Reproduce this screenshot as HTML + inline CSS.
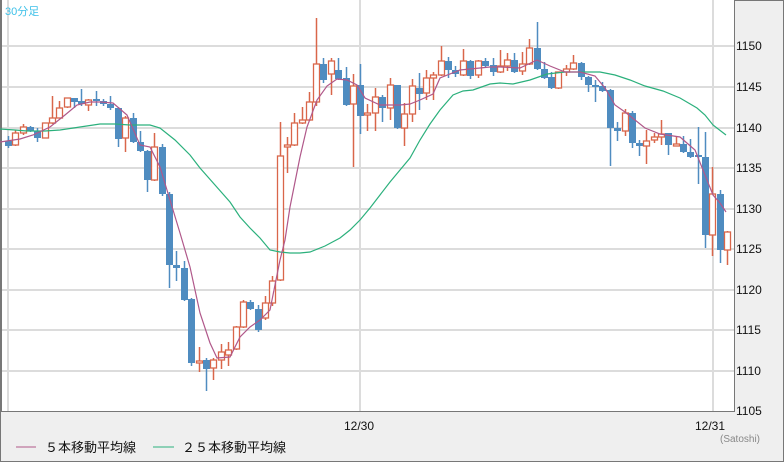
<!DOCTYPE html>
<html><head><meta charset="utf-8"><style>
html,body{margin:0;padding:0;background:#efefef;}
body{width:784px;height:462px;overflow:hidden;position:relative;font-family:"Liberation Sans","Noto Sans CJK JP",sans-serif;}
</style></head><body>
<svg id="s" width="784" height="462" xmlns="http://www.w3.org/2000/svg" style="position:absolute;left:0;top:0">
<rect x="0" y="0" width="784" height="462" fill="#efefef"/>
<rect x="0.5" y="0.5" width="783" height="461" fill="none" stroke="#777"/>
<rect x="1" y="0" width="733" height="411" fill="#fff"/>
<g stroke="#dcdcdc" stroke-width="2">
<line x1="1" y1="46" x2="734" y2="46"/><line x1="1" y1="87" x2="734" y2="87"/>
<line x1="1" y1="128" x2="734" y2="128"/><line x1="1" y1="168" x2="734" y2="168"/>
<line x1="1" y1="209" x2="734" y2="209"/><line x1="1" y1="249" x2="734" y2="249"/>
<line x1="1" y1="290" x2="734" y2="290"/><line x1="1" y1="330" x2="734" y2="330"/>
<line x1="1" y1="371" x2="734" y2="371"/>
<line x1="8" y1="0" x2="8" y2="411"/><line x1="360" y1="0" x2="360" y2="411"/><line x1="713" y1="0" x2="713" y2="411"/>
</g>
<line x1="1" y1="0" x2="1" y2="412" stroke="#777" stroke-width="2"/>
<line x1="0" y1="411.5" x2="735" y2="411.5" stroke="#777"/>
<line x1="734.5" y1="0" x2="734.5" y2="412" stroke="#777"/>
<g id="c"></g>
<polyline fill="none" stroke="#2bb07c" stroke-width="1.2" points="0,129 15,130 27,131 45,131 60,130 80,127 100,124 115,124 130,125 150,125 160,128 175,140 190,155 200,168 215,185 230,202 240,217 250,228 260,238 270,250 280,252 290,253 300,253 310,252 325,246 340,238 350,230 360,220 370,208 380,195 390,182 400,170 410,158 420,140 430,124 440,110 453,95 463,91 473,90 490,84 500,83 513,84 530,80 547,74 565,72 580,72 600,72 615,75 630,80 645,86 663,91 680,98 697,108 705,115 713,125 726,135"/>
<polyline fill="none" stroke="#b0588a" stroke-width="1.2" points="0,142 20,139 33,135 50,127 65,115 77,105 90,102 100,102 113,103 127,115 140,145 150,147 160,167 170,200 180,233 190,267 200,313 210,343 217,358 230,357 240,337 250,327 260,320 270,310 280,260 285,240 290,207 300,157 307,127 317,100 327,86 337,79 347,80 357,85 365,98 380,105 400,105 410,104 420,100 433,94 440,78 460,70 490,67 500,67 520,68 537,60 550,66 565,72 580,72 595,76 605,88 615,105 625,112 635,120 645,128 660,134 680,137 695,150 705,175 713,195 720,203 726,212"/>
<text x="5" y="15" font-size="11" fill="#3cc0e8">30分足</text>
<g font-size="12" fill="#111">
<text x="736" y="50">1150</text><text x="736" y="91">1145</text><text x="736" y="132">1140</text>
<text x="736" y="172">1135</text><text x="736" y="213">1130</text><text x="736" y="253">1125</text>
<text x="736" y="294">1120</text><text x="736" y="334">1115</text><text x="736" y="375">1110</text>
<text x="736" y="415">1105</text>
<text x="344" y="430">12/30</text><text x="695" y="430">12/31</text>
</g>
<text x="720" y="442" font-size="10" fill="#888">(Satoshi)</text>
<line x1="16" y1="447" x2="36" y2="447" stroke="#b0588a" stroke-width="1"/>
<line x1="153" y1="447" x2="174" y2="447" stroke="#2bb07c" stroke-width="1"/>
<g font-size="13" fill="#111">
<text x="45" y="452">５本移動平均線</text>
<text x="182" y="452">２５本移動平均線</text>
</g>
</svg>
<script>
var d=[[8,136,141,146,148,0],[15,130,133,145,146,1],[23,124,127,133,135,1],[30,126,127,131,132,0],[37,128,131,138,142,0],[45,123,123,138,138,1],[52,96,118,123,124,1],[59,101,108,118,118,1],[67,98,98,107,108,1],[74,98,98,102,108,0],[81,89,101,104,106,0],[88,99,100,105,111,1],[96,91,99,101,106,0],[103,99,101,104,106,0],[110,96,104,108,110,0],[118,107,108,139,147,0],[125,116,118,138,152,1],[133,113,118,142,143,0],[140,131,142,151,152,0],[147,150,151,180,192,0],[154,133,147,180,181,1],[162,144,147,194,196,0],[169,192,194,265,288,0],[176,251,265,268,281,0],[184,261,268,300,301,0],[191,298,299,363,366,0],[199,347,361,363,372,1],[206,358,360,369,391,0],[213,358,360,368,380,1],[221,344,352,360,369,1],[228,342,350,355,366,1],[236,326,327,349,350,1],[243,300,302,327,328,1],[250,300,302,309,310,0],[258,305,309,330,332,0],[265,296,303,318,320,1],[272,276,281,303,306,1],[280,122,156,280,281,1],[287,137,145,146,173,1],[294,113,123,145,146,1],[302,107,120,123,124,1],[309,92,102,120,121,1],[316,18,64,102,106,1],[323,58,64,80,83,0],[331,58,61,74,95,1],[338,58,70,79,80,0],[346,67,78,105,106,0],[353,74,86,104,167,1],[360,64,85,116,134,0],[367,104,113,115,131,1],[375,88,97,113,131,1],[382,95,97,108,122,0],[390,78,85,108,120,1],[397,85,85,128,129,0],[404,103,114,128,146,1],[412,79,86,114,122,1],[419,73,88,94,110,0],[426,70,78,93,100,1],[433,72,75,78,100,1],[441,46,61,75,76,1],[448,57,61,70,78,0],[455,66,70,74,77,0],[463,49,61,75,76,1],[470,60,61,76,79,0],[478,60,61,75,78,1],[485,58,61,66,67,0],[493,58,65,72,76,0],[500,50,66,72,73,1],[507,53,60,66,71,1],[514,53,60,72,73,0],[522,52,64,71,75,1],[529,39,48,64,65,1],[537,22,48,69,70,0],[544,62,69,78,79,0],[551,72,77,88,89,0],[558,72,72,88,89,1],[566,65,69,72,76,1],[573,55,63,69,70,1],[581,62,63,77,80,0],[588,76,77,85,92,0],[595,80,85,86,102,0],[602,82,86,91,92,0],[610,89,90,128,166,0],[617,122,128,131,141,0],[625,109,113,131,136,1],[632,111,113,143,148,0],[639,140,143,146,156,0],[646,130,141,146,164,1],[654,133,137,140,143,1],[661,120,134,137,145,1],[668,133,133,145,155,0],[676,137,144,145,146,1],[683,136,144,152,153,0],[690,139,152,157,158,0],[698,127,155,157,184,0],[705,132,157,235,248,0],[712,167,194,235,256,1],[720,190,194,250,263,0],[727,231,232,250,265,1]];
var g=document.getElementById('c'),h='';
d.forEach(function(c){var x=c[0],col=c[5]?'#d9664a':'#4f8cc0';
h+='<line x1="'+(x+0.5)+'" y1="'+c[1]+'" x2="'+(x+0.5)+'" y2="'+c[4]+'" stroke="'+col+'" stroke-width="1.5"/>';
var hh=Math.max(c[3]-c[2],2);
if(c[5])h+='<rect x="'+(x-2.5)+'" y="'+c[2]+'" width="6" height="'+hh+'" fill="#fff" stroke="'+col+'" stroke-width="1.3"/>';
else h+='<rect x="'+(x-3)+'" y="'+c[2]+'" width="7" height="'+hh+'" fill="'+col+'"/>';});
g.innerHTML=h;
</script>
</body></html>
